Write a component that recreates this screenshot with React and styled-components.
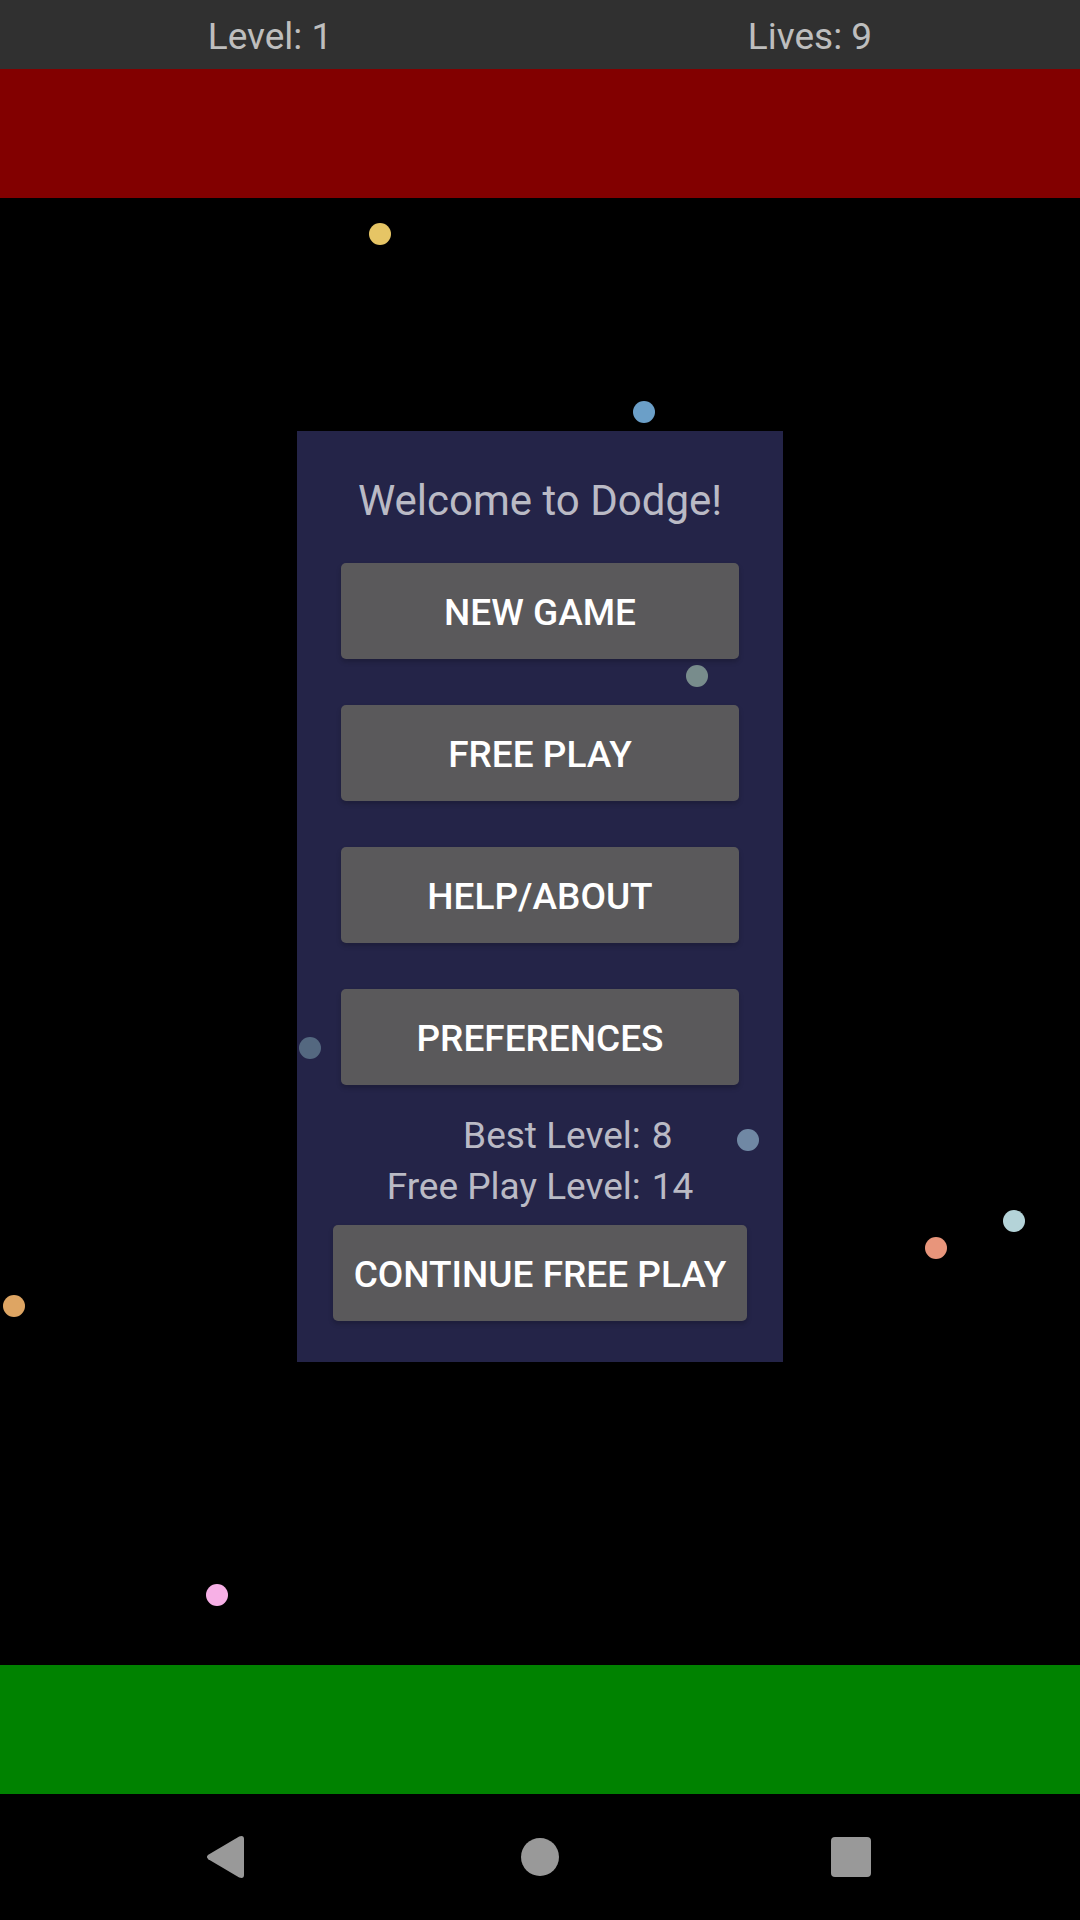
import React from "react";
import styled, { createGlobalStyle } from "styled-components";

const GlobalStyle = createGlobalStyle`
  * {
    box-sizing: border-box;
  }
  body {
    margin: 0;
    background: #000;
    font-family: Roboto, "Liberation Sans", sans-serif;
  }
`;

const Screen = styled.div`
  display: flex;
  flex-direction: column;
  min-height: 100vh;
`;

const Game = styled.main`
  position: relative;
  display: flex;
  flex-direction: column;
  flex: 1;
`;

const StatusBar = styled.header`
  display: grid;
  grid-template-columns: 1fr 1fr;
  padding: 15px 0 11px;
  background: #303030;
`;

const Status = styled.div`
  font-size: 37px;
  line-height: 43px;
  text-align: center;
  color: rgba(255, 255, 255, 0.7);
`;

const Field = styled.div`
  position: relative;
  display: flex;
  flex-direction: column;
  justify-content: space-between;
  flex: 1;
  overflow: hidden;
`;

const Zone = styled.div`
  height: 129px;
  background: ${({ $color }) => $color};
`;

const Ball = styled.div`
  position: absolute;
  width: 22px;
  height: 22px;
  border-radius: 50%;
  background: ${({ $color }) => $color};
`;

const Overlay = styled.div`
  position: absolute;
  inset: 0;
  display: flex;
  justify-content: center;
  align-items: center;
  padding-bottom: 1px;
`;

const Menu = styled.section`
  display: flex;
  flex-direction: column;
  align-items: center;
  width: 45%;
  min-width: 486px;
  padding: 42px 36px 41px;
  background: rgba(64, 64, 128, 0.565);
`;

const Title = styled.h1`
  margin: 0 0 34px;
  font-size: 42px;
  line-height: 56px;
  font-weight: 400;
  color: rgba(255, 255, 255, 0.7);
`;

const MenuList = styled.nav`
  display: flex;
  flex-direction: column;
  align-self: stretch;
  gap: 46px;
  padding: 0 8px;
`;

const Button = styled.button`
  height: 96px;
  padding: 2px 21px 0;
  border: none;
  border-radius: 5px;
  background: #5a595b;
  box-shadow: 0 3px 5px rgba(0, 0, 0, 0.2);
  font-family: inherit;
  font-size: 37px;
  font-weight: 500;
  line-height: 43px;
  text-transform: uppercase;
  white-space: nowrap;
  color: #fff;
  cursor: pointer;
`;

const Scores = styled.dl`
  display: grid;
  grid-template-columns: auto auto;
  column-gap: 11px;
  margin: 25px 0 13px;
  font-size: 37px;
  line-height: 51px;
  color: rgba(255, 255, 255, 0.7);
`;

const ScoreLabel = styled.dt`
  text-align: right;
`;

const ScoreValue = styled.dd`
  margin: 0;
`;

const NavBar = styled.footer`
  display: grid;
  grid-template-columns: repeat(3, 1fr);
  justify-items: center;
  padding: 33px 73px;
  background: #000;
`;

const NavButton = styled.button`
  display: flex;
  padding: 0;
  border: none;
  background: none;
  cursor: pointer;
`;

const NavIcon = styled.svg`
  width: 60px;
  height: 60px;
  fill: #999;
`;

const RADIUS = 11;

// x and y are the centre of each ball within the field
const balls = [
  { x: 380, y: 165, color: "#e6c565" },
  { x: 644, y: 343, color: "#6b9fc8" },
  { x: 697, y: 607, color: "#c1ef9c" },
  { x: 310, y: 979, color: "#6e9c81" },
  { x: 748, y: 1071, color: "#afe6d3" },
  { x: 1014, y: 1152, color: "#b4d3d8" },
  { x: 936, y: 1179, color: "#e8957b" },
  { x: 14, y: 1237, color: "#dea563" },
  { x: 217, y: 1526, color: "#f7b0e6" },
];

const menuItems = ["New Game", "Free Play", "Help/About", "Preferences"];

const scores = [
  { label: "Best Level:", value: 8 },
  { label: "Free Play Level:", value: 14 },
];

const App = () => {
  return (
    <Screen>
      <GlobalStyle />
      <Game>
        <StatusBar>
          <Status>Level: 1</Status>
          <Status>Lives: 9</Status>
        </StatusBar>
        <Field>
          <Zone $color="#820000" />
          <Zone $color="#008200" />
          {balls.map(({ x, y, color }) => (
            <Ball
              key={color}
              $color={color}
              style={{ left: x - RADIUS, top: y - RADIUS }}
            />
          ))}
        </Field>
        <Overlay>
          <Menu>
            <Title>Welcome to Dodge!</Title>
            <MenuList>
              {menuItems.map((item) => (
                <Button key={item} type="button">
                  {item}
                </Button>
              ))}
            </MenuList>
            <Scores>
              {scores.map(({ label, value }) => (
                <React.Fragment key={label}>
                  <ScoreLabel>{label}</ScoreLabel>
                  <ScoreValue>{value}</ScoreValue>
                </React.Fragment>
              ))}
            </Scores>
            <Button type="button">Continue Free Play</Button>
          </Menu>
        </Overlay>
      </Game>
      <NavBar>
        <NavButton type="button" aria-label="Back">
          <NavIcon viewBox="0 0 60 60">
            <path d="M9.3 27.8 40.2 9.5Q45 8 45 12V48Q45 52 40.2 50.5L9.3 32.2Q6.6 30 9.3 27.8Z" />
          </NavIcon>
        </NavButton>
        <NavButton type="button" aria-label="Home">
          <NavIcon viewBox="0 0 60 60">
            <circle cx="30" cy="30" r="19" />
          </NavIcon>
        </NavButton>
        <NavButton type="button" aria-label="Recent apps">
          <NavIcon viewBox="0 0 60 60">
            <rect x="10" y="10" width="40" height="40" rx="4" />
          </NavIcon>
        </NavButton>
      </NavBar>
    </Screen>
  );
};

export default App;
